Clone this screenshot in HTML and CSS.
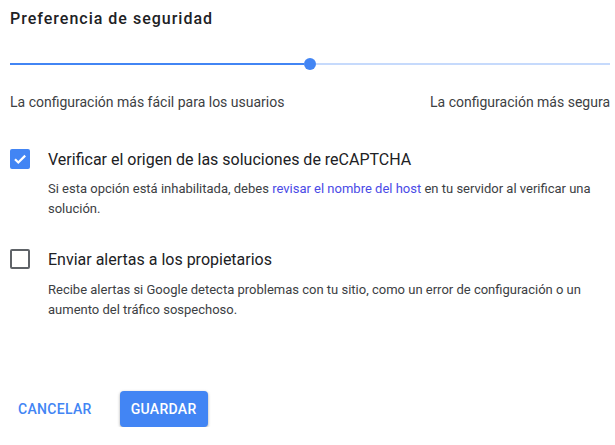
FILE: index.html
```html
<!DOCTYPE html>
<html lang="es">
<head>
    <meta charset="UTF-8">
    <meta name="viewport" content="width=device-width, initial-scale=1.0">
    <title>Preferencia de seguridad</title>
    <link rel="stylesheet" href="styles.css">
</head>
<body>
    <div class="panel">
        <h2 class="title">Preferencia de seguridad</h2>

        <div class="slider">
            <div class="track-on"></div>
            <div class="thumb"></div>
            <div class="track-off"></div>
        </div>
        <div class="slider-labels">
            <span>La configuración más fácil para los usuarios</span>
            <span>La configuración más segura</span>
        </div>

        <div class="option">
            <div class="option-row">
                <span class="checkbox checked">
                    <svg viewBox="0 0 20 20" width="20" height="20">
                        <path d="M5 10.2l3.3 3.3L15.2 6.6" fill="none" stroke="#fff" stroke-width="2.2"/>
                    </svg>
                </span>
                <span class="option-label">Verificar el origen de las soluciones de reCAPTCHA</span>
            </div>
            <p class="option-desc">Si esta opción está inhabilitada, debes <a href="#">revisar el nombre del host</a> en tu servidor al verificar una solución.</p>
        </div>

        <div class="option">
            <div class="option-row">
                <span class="checkbox"></span>
                <span class="option-label">Enviar alertas a los propietarios</span>
            </div>
            <p class="option-desc">Recibe alertas si Google detecta problemas con tu sitio, como un error de configuración o un aumento del tráfico sospechoso.</p>
        </div>

        <div class="actions">
            <button class="btn-text">CANCELAR</button>
            <button class="btn-primary">GUARDAR</button>
        </div>
    </div>
</body>
</html>
```

FILE: styles.css
```css
body {
    margin: 0;
    background-color: #fff;
    font-family: Roboto, "Open Sans", sans-serif;
    color: #3c4043;
}
.panel {
    width: 600px;
    padding: 9px 0 0 10px;
}
.title {
    margin: 0;
    font-size: 16px;
    font-weight: 500;
    letter-spacing: 1px;
    color: #202124;
    line-height: 20px;
}
.slider {
    display: flex;
    align-items: center;
    height: 12px;
    margin-top: 29px;
}
.track-on {
    width: 294px;
    height: 2px;
    background-color: #4285f4;
}
.thumb {
    width: 12px;
    height: 12px;
    border-radius: 50%;
    background-color: #4285f4;
}
.track-off {
    flex: 1;
    height: 2px;
    background-color: #c6dafc;
}
.slider-labels {
    display: flex;
    justify-content: space-between;
    margin-top: 22px;
    font-size: 14px;
    line-height: 20px;
    color: #3c4043;
}
.option {
    margin-top: 37px;
}
.option + .option {
    margin-top: 30px;
}
.option-row {
    display: flex;
    align-items: center;
    gap: 18px;
}
.checkbox {
    width: 16px;
    height: 16px;
    border: 2px solid #5f6368;
    border-radius: 2px;
    flex-shrink: 0;
}
.checkbox.checked {
    width: 20px;
    height: 20px;
    border: none;
    background-color: #4285f4;
}
.checkbox svg {
    display: block;
}
.option-label {
    font-size: 16px;
    color: #202124;
}
.option-desc {
    margin: 10px 0 0 38px;
    font-size: 13px;
    line-height: 20px;
    color: #3c4043;
}
.option + .option .option-desc {
    margin-top: 11px;
}
.option-desc a {
    color: #4a4ae6;
    text-decoration: none;
}
.actions {
    display: flex;
    align-items: center;
    gap: 20px;
    margin-top: 71px;
}
.btn-text, .btn-primary {
    font-family: Roboto, sans-serif;
    font-size: 14px;
    font-weight: 500;
    letter-spacing: 0.3px;
    border: none;
    cursor: pointer;
}
.btn-text {
    background: none;
    color: #4285f4;
    padding: 0 8px;
    height: 36px;
}
.btn-primary {
    background-color: #4285f4;
    color: #fff;
    width: 88px;
    height: 36px;
    border-radius: 4px;
    box-shadow: 0 1px 3px rgba(0, 0, 0, 0.35);
}
```
